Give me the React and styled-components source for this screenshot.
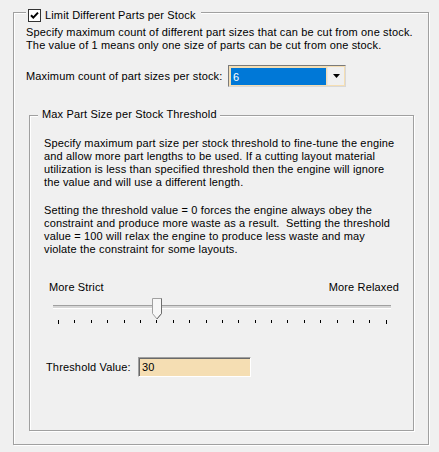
import React from "react";
import styled, { createGlobalStyle } from "styled-components";

const GlobalStyle = createGlobalStyle`
    body {
        margin: 0;
        background: #f0f0f0;
        font-family: "Liberation Sans", Arial, sans-serif;
        font-size: 11px;
        letter-spacing: 0.15px;
        color: #000;
    }
`;

const TICKS = Array.from({length: 21}, (_, i) => i);
const THRESHOLD = 30;

const App = () => {
    return (
        <Page>
            <GlobalStyle />
            <Group $width={416} $height={433} style={{paddingLeft: 12}}>
                <Legend $left={12} $top={-4}>
                    <CheckBox>
                        <svg width="11" height="11" viewBox="0 0 11 11">
                            <path d="M2 5.2 L4.3 7.6 L9 2.6" fill="none" stroke="#000" strokeWidth="2"/>
                        </svg>
                    </CheckBox>
                    <span>Limit Different Parts per Stock</span>
                </Legend>

                <Text $top={13}>
                    Specify maximum count of different part sizes that can be cut from one stock.<br/>
                    The value of 1 means only one size of parts can be cut from one stock.
                </Text>

                <ComboRow>
                    <FieldLabel $width={196}>Maximum count of part sizes per stock:</FieldLabel>
                    <Combo>
                        <ComboValue>6</ComboValue>
                        <ComboButton>
                            <svg width="7" height="4" viewBox="0 0 7 4">
                                <path d="M0 0 H7 L3.5 4 Z" fill="#000"/>
                            </svg>
                        </ComboButton>
                    </Combo>
                </ComboRow>

                <Group $width={385} $height={316} style={{marginLeft: 3, marginTop: 28}}>
                    <Legend $left={8} $top={-8} style={{padding: "0 3px 0 4px"}}>
                        Max Part Size per Stock Threshold
                    </Legend>

                    <Text $top={21} $left={14}>
                        Specify maximum part size per stock threshold to fine-tune the engine<br/>
                        and allow more part lengths to be used. If a cutting layout material<br/>
                        utilization is less than specified threshold then the engine will ignore<br/>
                        the value and will use a different length.
                    </Text>
                    <Text $top={15} $left={14}>
                        Setting the threshold value = 0 forces the engine always obey the<br/>
                        constraint and produce more waste as a result.&nbsp; Setting the threshold<br/>
                        value = 100 will relax the engine to produce less waste and may<br/>
                        violate the constraint for some layouts.
                    </Text>

                    <SliderLabels>
                        <span>More Strict</span>
                        <span>More Relaxed</span>
                    </SliderLabels>
                    <Slider>
                        <Track />
                        <Thumb style={{left: 5 + (THRESHOLD / 100) * 328 - 4.6}}>
                            <svg width="10" height="22" viewBox="0 0 10 22">
                                <path d="M0.5 0.5 H9.5 V15.5 L5 21 L0.5 15.5 Z" fill="#f7f7f7" stroke="#a0a0a0"/>
                                <path d="M9.5 0.5 V15.5 L5 21" fill="none" stroke="#6d6d6d"/>
                            </svg>
                        </Thumb>
                        <Ticks>
                            {TICKS.map((t) => (
                                <Tick key={t} $end={t === 0 || t === 20}/>
                            ))}
                        </Ticks>
                    </Slider>

                    <ThresholdRow>
                        <FieldLabel $width={87}>Threshold Value:</FieldLabel>
                        <ValueInput>30</ValueInput>
                    </ThresholdRow>
                </Group>
            </Group>
        </Page>
    );
};

export default App;

const Page = styled.div`
    width: 439px;
    height: 452px;
    padding: 12px 0 0 13px;
    box-sizing: border-box;
`;

const Group = styled.div`
    position: relative;
    box-sizing: border-box;
    width: ${(p) => p.$width}px;
    height: ${(p) => p.$height}px;
    border: 1px solid #a0a0a0;
    box-shadow: 1px 1px 0 #fff, inset 1px 1px 0 #fff;
    display: flex;
    flex-direction: column;
    align-items: flex-start;
`;

const Legend = styled.div`
    position: absolute;
    left: ${(p) => p.$left}px;
    top: ${(p) => p.$top}px;
    display: flex;
    align-items: center;
    gap: 4px;
    height: 13px;
    line-height: 13px;
    padding: 0 5px 0 2px;
    background: #f0f0f0;
    white-space: nowrap;
`;

const CheckBox = styled.div`
    width: 13px;
    height: 13px;
    box-sizing: border-box;
    border: 1px solid #333;
    background: #fff;
    display: flex;
    align-items: center;
    justify-content: center;
`;

const Text = styled.p`
    margin: ${(p) => p.$top}px 0 0 ${(p) => p.$left || 0}px;
    line-height: 13px;
    white-space: nowrap;
`;

const FieldLabel = styled.span`
    width: ${(p) => p.$width}px;
    white-space: nowrap;
`;

const ComboRow = styled.div`
    display: flex;
    align-items: center;
    gap: 6px;
    margin-top: 13px;
    height: 22px;
`;

const Combo = styled.div`
    width: 118px;
    height: 22px;
    box-sizing: border-box;
    display: flex;
    padding: 1px;
    border: 1px solid;
    border-color: #7a7a7a #d8d8d8 #d8d8d8 #7a7a7a;
    background: #f5deb3;
`;

const ComboValue = styled.div`
    flex: 1;
    background: #0078d7;
    color: #fff;
    line-height: 18px;
    padding-left: 2px;
    margin: 1px 1px 0 1px;
`;

const ComboButton = styled.div`
    width: 16px;
    background: #f0f0f0;
    border-left: 1px solid #e6e6e6;
    display: flex;
    align-items: center;
    justify-content: center;
`;

const SliderLabels = styled.div`
    align-self: stretch;
    display: flex;
    justify-content: space-between;
    margin-top: 25px;
    padding: 0 14px 0 19px;
    line-height: 13px;
`;

const Slider = styled.div`
    position: relative;
    width: 338px;
    height: 27px;
    margin: 4px 0 0 23px;
`;

const Track = styled.div`
    margin-top: 7px;
    height: 2px;
    border-top: 1px solid #a0a0a0;
    border-bottom: 1px solid #fff;
    background: #d6d6d6;
`;

const Thumb = styled.div`
    position: absolute;
    top: 0;
    width: 10px;
    height: 22px;
    svg { display: block; }
`;

const Ticks = styled.div`
    display: flex;
    justify-content: space-between;
    padding: 0 4px 0 5px;
    margin-top: 11px;
    align-items: flex-start;
`;

const Tick = styled.div`
    width: 1px;
    height: ${(p) => (p.$end ? 4 : 3)}px;
    background: #000;
`;

const ThresholdRow = styled.div`
    display: flex;
    align-items: center;
    gap: 5px;
    margin-top: 32px;
    padding-left: 16px;
    height: 20px;
`;

const ValueInput = styled.div`
    width: 113px;
    height: 20px;
    box-sizing: border-box;
    border: 1px solid;
    border-color: #a0a0a0 #fff #fff #a0a0a0;
    box-shadow: inset 1px 1px 0 #696969;
    background: #f5deb3;
    padding: 2px 0 0 3px;
    line-height: 15px;
`;
